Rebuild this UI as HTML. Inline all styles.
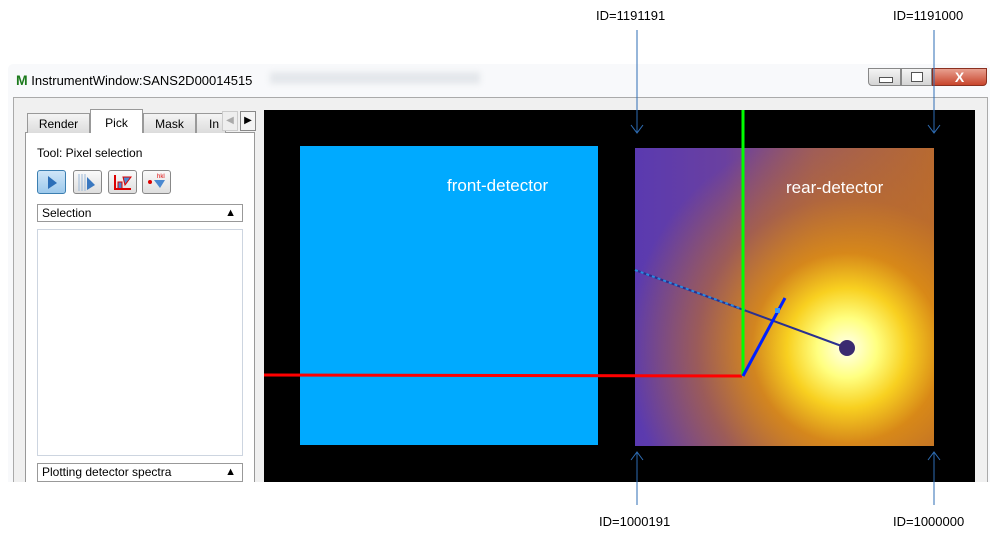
<!DOCTYPE html>
<html><head><meta charset="utf-8"><style>
body{margin:0;width:996px;height:543px;background:#fff;position:relative;overflow:hidden;font-family:"Liberation Sans",sans-serif}
.a{position:absolute}
.t{font-size:12px;color:#000}
.tab{position:absolute;top:113px;height:20px;border:1px solid #999;border-bottom:none;background:linear-gradient(#f4f4f4,#dcdcdc);font-size:12px;text-align:center;line-height:20px;box-sizing:border-box}
.ib{position:absolute;top:170px;width:29px;height:24px;border:1px solid #888;border-radius:3px;background:linear-gradient(#fafafa,#dedede);box-sizing:border-box}
.hd{position:absolute;left:37px;width:206px;height:18px;border:1px solid #999;background:#fff;box-sizing:border-box;font-size:12px;line-height:16px;padding-left:4px}
.hd span{position:absolute;right:6px;top:0;font-size:11px}
</style></head><body>
<div class="a" style="left:8px;top:64px;width:982px;height:420px;background:#f8f9fb;border-radius:5px 5px 0 0"></div>
<div class="a t" style="left:16px;top:72px;font-size:13px"><b style="color:#1c7a1c;font-size:14px">M</b> InstrumentWindow:SANS2D00014515</div>
<div class="a" style="left:270px;top:72px;width:210px;height:12px;background:#e4e7eb;filter:blur(3px)"></div>
<div class="a" style="left:868px;top:68px;width:33px;height:18px;background:linear-gradient(#f4f4f4,#d4d4d4);border:1px solid #888;border-radius:0 0 0 4px;box-sizing:border-box"><div class="a" style="left:10px;top:8px;width:12px;height:4px;border:1px solid #555;background:#fff"></div></div>
<div class="a" style="left:901px;top:68px;width:31px;height:18px;background:linear-gradient(#f4f4f4,#d4d4d4);border:1px solid #888;box-sizing:border-box"><div class="a" style="left:9px;top:3px;width:10px;height:8px;border:1px solid #555;background:#fff"></div></div>
<div class="a" style="left:932px;top:68px;width:55px;height:18px;background:linear-gradient(#e8a090,#c8452c);border:1px solid #8a3020;border-radius:0 0 4px 0;box-sizing:border-box;color:#fff;font-weight:bold;text-align:center;line-height:16px;font-size:14px">X</div>
<div class="a" style="left:13px;top:97px;width:975px;height:390px;background:#f0f0f0;border:1px solid #aaa;box-sizing:border-box"></div>
<div class="a" style="left:25px;top:132px;width:230px;height:352px;background:#fff;border:1px solid #999;box-sizing:border-box"></div>
<div class="tab" style="left:27px;width:63px">Render</div>
<div class="tab" style="left:90px;width:53px;top:109px;height:24px;background:#fff;line-height:26px">Pick</div>
<div class="tab" style="left:143px;width:53px">Mask</div>
<div class="tab" style="left:196px;width:30px;text-align:left;padding-left:12px">In</div>
<div class="a" style="left:222px;top:111px;width:16px;height:20px;background:#eee;border:1px solid #ccc;box-sizing:border-box;color:#aaa;font-size:10px;line-height:18px;text-align:center">◀</div>
<div class="a" style="left:240px;top:111px;width:16px;height:20px;background:#f4f4f4;border:1px solid #888;box-sizing:border-box;font-size:10px;line-height:18px;text-align:center">▶</div>
<div class="a t" style="left:37px;top:146px">Tool: Pixel selection</div>
<div class="ib" style="left:37px;background:linear-gradient(#cfe6f8,#9dc9ec);border-color:#3c7fb1"><svg width="27" height="22"><path d="M10 5 L19 12 L10 18 Z" fill="#2c6fb8"/></svg></div>
<div class="ib" style="left:73px"><svg width="27" height="22"><path d="M5 3v17M8 3v17M11 3v17" stroke="#9bb8d8"/><path d="M13 6 L21 14 L13 19 Z" fill="#3a78c0"/></svg></div>
<div class="ib" style="left:108px"><svg width="27" height="22"><path d="M6 4v14h16" stroke="#d00" fill="none" stroke-width="2"/><path d="M9 17v-6h4v6M14 6 L22 6 L16 14Z" stroke="#d00" fill="#4a88d0"/></svg></div>
<div class="ib" style="left:142px"><svg width="27" height="22"><circle cx="7" cy="11" r="2" fill="#d00"/><path d="M11 9 L22 9 L17 17Z" fill="#4a88d0"/><text x="14" y="7" font-size="6" fill="#d00">hkl</text></svg></div>
<div class="hd" style="top:204px">Selection<span>▲</span></div>
<div class="a" style="left:37px;top:229px;width:206px;height:227px;border:1px solid #cdd5e0;box-sizing:border-box;background:#fff"></div>
<div class="hd" style="top:463px;height:19px">Plotting detector spectra<span>▲</span></div>
<div class="a" style="left:264px;top:110px;width:711px;height:372px;background:#000"></div>
<div class="a" style="left:300px;top:146px;width:298px;height:299px;background:#00aaff"></div>
<div class="a" style="left:447px;top:176px;color:#fff;font-size:17px">front-detector</div>
<div class="a" style="left:635px;top:148px;width:299px;height:298px;background:radial-gradient(circle at 212px 200px,#fffff0 0,#ffff80 30px,#f8d020 60px,rgba(220,140,20,0.9) 95px,rgba(190,110,40,0.6) 150px,rgba(190,110,40,0) 220px),linear-gradient(90deg,#5a3ab0 0,#6a40a0 30%,#9a5a60 60%,#b86a30 100%)"></div>
<div class="a" style="left:786px;top:178px;color:#fff;font-size:17px">rear-detector</div>
<svg class="a" style="left:0;top:0" width="996" height="543">
<line x1="635" y1="270" x2="847" y2="348" stroke="#2a3090" stroke-width="2"/>
<line x1="635" y1="270" x2="745" y2="310" stroke="#2a8ae0" stroke-width="2" stroke-dasharray="3 3"/>
<circle cx="847" cy="348" r="8" fill="#3a2a70"/>
<line x1="264" y1="375" x2="742" y2="376" stroke="#f00" stroke-width="3"/>
<line x1="743" y1="110" x2="743" y2="376" stroke="#0f0" stroke-width="3"/>
<line x1="743" y1="376" x2="785" y2="298" stroke="#0020ff" stroke-width="3"/>
<rect x="775" y="308" width="5" height="5" fill="#39f"/>
<g stroke="#2e6db4" fill="none" stroke-width="1">
<path d="M637 30V133M631 125l6 8 6-8"/>
<path d="M934 30V133M928 125l6 8 6-8"/>
<path d="M637 482V452M631 460l6-8 6 8"/>
<path d="M934 482V452M928 460l6-8 6 8"/>
</g>
<g font-family="Liberation Sans" font-size="13" fill="#000">
<text x="596" y="20">ID=1191191</text>
<text x="893" y="20">ID=1191000</text>
</g>
</svg>
<div class="a" style="left:0;top:482px;width:996px;height:61px;background:#fff"></div>
<svg class="a" style="left:0;top:482px" width="996" height="61"><g stroke="#2e6db4"><path d="M637 0V23M934 0V23"/></g><g font-family="Liberation Sans" font-size="13"><text x="599" y="44">ID=1000191</text><text x="893" y="44">ID=1000000</text></g></svg>
</body></html>
